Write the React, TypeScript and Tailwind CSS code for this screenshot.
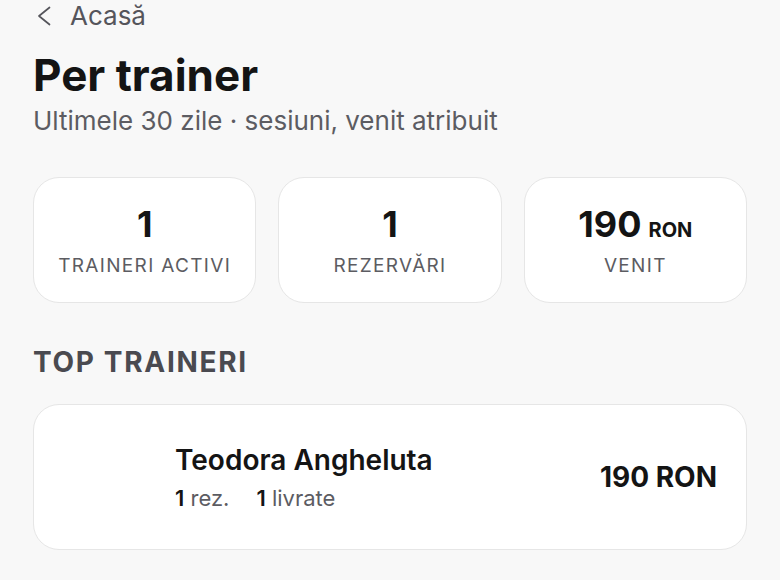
const stats = [
  { value: "1", unit: "", label: "TRAINERI ACTIVI" },
  { value: "1", unit: "", label: "REZERVĂRI" },
  { value: "190", unit: "RON", label: "VENIT" },
];

export default function App() {
  return (
    <div className="min-h-[580px] bg-[#f8f8f8] px-[33px] font-['Inter',sans-serif] text-[#141414]">
      <div className="flex h-[32px] items-center gap-[19px] pl-[4px] text-[#55555b]">
        <svg width="14" height="20" viewBox="0 0 14 20" fill="none" className="shrink-0">
          <path d="M12.5 1.5 2 10l10.5 8.5" stroke="currentColor" strokeWidth="1.7" strokeLinecap="round" strokeLinejoin="round" />
        </svg>
        <span className="text-[26px] leading-[32px]">Acasă</span>
      </div>

      <h1 className="mt-[17px] text-[44px] font-bold leading-[52px]">Per trainer</h1>
      <p className="mt-[4px] text-[26px] leading-[32px] text-[#5c5c62]">
        Ultimele 30 zile · sesiuni, venit atribuit
      </p>

      <div className="mt-[40px] grid grid-cols-3 gap-[22px]">
        {stats.map((s) => (
          <div
            key={s.label}
            className="flex h-[126px] flex-col items-center rounded-[26px] border border-[#e6e6e6] bg-white pt-[24px]"
          >
            <div className="flex h-[44px] items-baseline gap-[7px]">
              <span className="text-[36px] font-bold leading-[44px]">{s.value}</span>
              {s.unit && <span className="text-[20px] font-bold">{s.unit}</span>}
            </div>
            <span className="mt-[8px] text-[19px] leading-[24px] tracking-[0.07em] text-[#5c5c62]">{s.label}</span>
          </div>
        ))}
      </div>

      <h2 className="mt-[42px] text-[28px] font-bold leading-[34px] tracking-[0.06em] text-[#4a4a50]">TOP TRAINERI</h2>

      <div className="mt-[25px] flex h-[146px] items-center rounded-[26px] border border-[#e6e6e6] bg-white pr-[29px]">
        <div className="w-[141px] shrink-0" />
        <div className="flex flex-1 flex-col">
          <span className="text-[28px] font-semibold leading-[34px]">Teodora Angheluta</span>
          <div className="mt-[7px] flex gap-[27px] text-[22px] leading-[28px] text-[#5c5c62]">
            <span>
              <b className="font-semibold text-[#141414]">1</b> rez.
            </span>
            <span>
              <b className="font-semibold text-[#141414]">1</b> livrate
            </span>
          </div>
        </div>
        <span className="text-[28px] font-bold">190 RON</span>
      </div>
    </div>
  );
}
